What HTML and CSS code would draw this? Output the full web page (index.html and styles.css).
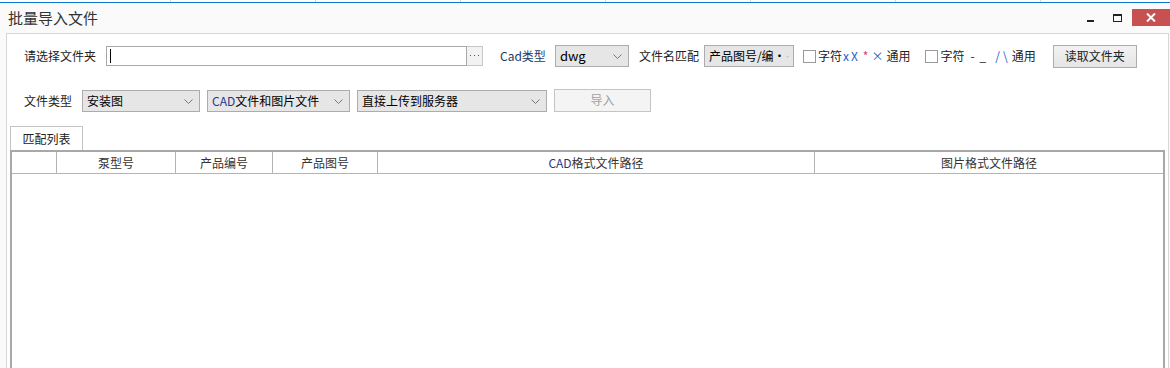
FILE: index.html
```html
<!DOCTYPE html>
<html lang="zh-CN">

<head>
    <meta charset="UTF-8">
    <title>批量导入文件</title>
    <link rel="stylesheet" href="styles.css">
</head>

<body>
    <div class="strip">
        <span></span><span></span><span></span><span></span><span></span><span></span><span></span>
    </div>

    <div class="titlebar">
        <span class="title">批量导入文件</span>
        <div class="win_ctrls">
            <div class="win_min"></div>
            <div class="win_max"></div>
            <div class="win_x">
                <svg width="10" height="9" viewBox="0 0 10 9">
                    <path d="M1 0.5 L9 8.5 M9 0.5 L1 8.5" stroke="#fff" stroke-width="2"/>
                </svg>
            </div>
        </div>
    </div>

    <div class="panel">
        <div class="row row1">
            <span class="label">请选择文件夹</span>
            <div class="path">
                <span class="path_input"><span class="caret"></span></span>
                <span class="dots">
                    <svg width="9" height="2" viewBox="0 0 9 2"><rect x="0" y="0" width="1" height="1" fill="#555"/><rect x="4" y="0" width="1" height="1" fill="#555"/><rect x="8" y="0" width="1" height="1" fill="#555"/></svg>
                </span>
            </div>
            <span class="label cad_label">Cad类型</span>
            <div class="select sel_dwg">dwg<svg class="arrow" width="9" height="5" viewBox="0 0 9 5"><path d="M0.5 0.5 L4.5 4.5 L8.5 0.5" fill="none" stroke="#777"/></svg></div>
            <span class="label match_label">文件名匹配</span>
            <div class="select sel_match">产品图号/编·<svg class="arrow" width="9" height="5" viewBox="0 0 9 5"><path d="M0.5 0.5 L4.5 4.5 L8.5 0.5" fill="none" stroke="#777"/></svg></div>
            <label class="check chk1"><span class="box"></span>字符<span class="s1 blue">x</span><span class="s2 blue">X</span><span class="s3 red">*</span><span class="s4 blue">×</span><span class="s5">通用</span></label>
            <label class="check chk2"><span class="box"></span>字符<span class="t1">-</span><span class="t2">_</span><span class="t3 blue">/</span><span class="t4 blue">\</span><span class="t5">通用</span></label>
            <button class="btn btn_read">读取文件夹</button>
        </div>

        <div class="row row2">
            <span class="label">文件类型</span>
            <div class="select sel_type">安装图<svg class="arrow" width="9" height="5" viewBox="0 0 9 5"><path d="M0.5 0.5 L4.5 4.5 L8.5 0.5" fill="none" stroke="#777"/></svg></div>
            <div class="select sel_files"><span><span class="cad">CAD</span>文件和图片文件</span><svg class="arrow" width="9" height="5" viewBox="0 0 9 5"><path d="M0.5 0.5 L4.5 4.5 L8.5 0.5" fill="none" stroke="#777"/></svg></div>
            <div class="select sel_upload">直接上传到服务器<svg class="arrow" width="9" height="5" viewBox="0 0 9 5"><path d="M0.5 0.5 L4.5 4.5 L8.5 0.5" fill="none" stroke="#777"/></svg></div>
            <button class="btn btn_import" disabled>导入</button>
        </div>

        <div class="tabs">
            <span class="tab">匹配列表</span>
        </div>

        <div class="grid">
            <div class="grid_head">
                <span></span>
                <span>泵型号</span>
                <span>产品编号</span>
                <span>产品图号</span>
                <span><span class="cad">CAD</span>格式文件路径</span>
                <span>图片格式文件路径</span>
            </div>
            <div class="grid_body"></div>
        </div>
    </div>
</body>

</html>
```

FILE: styles.css
```css
body {
    margin: 0;
    padding: 0;
    width: 1170px;
    height: 368px;
    overflow: hidden;
    background-color: #fafafa;
    font-family: "Noto Sans CJK SC", sans-serif;
    font-size: 12px;
    color: #222;
}

.strip {
    display: flex;
    height: 2px;
    overflow: hidden;
    background-color: #fff;
    border-bottom: 1px solid #0a78d2;
    padding-left: 170px;
}

.strip span {
    flex: none;
    width: 144px;
    border-left: 1px solid #d8d8d8;
}

.titlebar {
    display: flex;
    justify-content: space-between;
    height: 30px;
    background-color: #fafafa;
}

.title {
    padding-left: 8px;
    font-size: 15px;
    line-height: 30px;
    color: #333;
}

.win_ctrls {
    display: flex;
    flex: none;
    width: 83px;
    align-items: flex-start;
}

.win_min {
    flex: none;
    width: 7px;
    height: 2px;
    background-color: #222;
    margin-top: 17px;
}

.win_max {
    flex: none;
    width: 7px;
    height: 5px;
    border: 1px solid #222;
    border-top-width: 2px;
    margin-top: 11px;
    margin-left: 19px;
}

.win_x {
    flex: none;
    display: flex;
    align-items: center;
    justify-content: center;
    width: 38px;
    height: 17px;
    margin-top: 6px;
    margin-left: 10px;
    background-color: #c75050;
}

.panel {
    margin-left: 6px;
    margin-right: 1px;
    height: 340px;
    background-color: #fff;
    border: 1px solid #d6d6d6;
    border-bottom: none;
}

.row {
    display: flex;
    align-items: center;
    height: 24px;
    padding-left: 17px;
}

.row1 {
    margin-top: 10px;
}

.row2 {
    margin-top: 21px;
}

.label {
    line-height: 16px;
    white-space: nowrap;
    color: #222;
}

.path {
    display: flex;
    flex: none;
    margin-left: 10px;
}

.path_input {
    display: flex;
    align-items: center;
    width: 359px;
    height: 18px;
    border: 1px solid #a8a8a8;
    background-color: #fff;
}

.caret {
    width: 1px;
    height: 14px;
    margin-left: 3px;
    background-color: #000;
}

.dots {
    display: flex;
    align-items: center;
    justify-content: center;
    width: 15px;
    height: 18px;
    border: 1px solid #c8c8c8;
    border-left: none;
    background-color: #f2f2f2;
}

.cad_label {
    margin-left: 17px;
    color: #1c3a6a;
}

.select {
    display: flex;
    flex: none;
    align-items: center;
    justify-content: space-between;
    box-sizing: border-box;
    height: 22px;
    padding: 0 6px 0 4px;
    border: 1px solid #acacac;
    background-color: #e6e6e6;
    color: #000;
    line-height: 16px;
    white-space: nowrap;
    overflow: hidden;
}

.sel_dwg {
    width: 74px;
    margin-left: 9px;
    font-size: 13px;
}

.match_label {
    margin-left: 10px;
}

.sel_match {
    width: 90px;
    margin-left: 5px;
    padding-right: 4px;
}

.check {
    display: flex;
    flex: none;
    align-items: center;
    line-height: 16px;
    white-space: nowrap;
    color: #222;
}

.chk1 {
    margin-left: 9px;
}

.chk2 {
    margin-left: 15px;
}

.box {
    width: 11px;
    height: 11px;
    border: 1px solid #9a9a9a;
    background-color: #fff;
    margin-right: 2px;
}

.s1 { margin-left: 1px; }
.s2 { margin-left: 2px; }
.s3 { margin-left: 5px; }
.s4 { margin-left: 3px; }
.s5 { margin-left: 3px; }

.t1 { margin-left: 6px; }
.t2 { margin-left: 5px; }
.t3 { margin-left: 9px; }
.t4 { margin-left: 3px; }
.t5 { margin-left: 4px; }

.blue {
    color: #2a5cc8;
}

.red {
    color: #e0406a;
}

.btn {
    flex: none;
    box-sizing: border-box;
    height: 23px;
    border: 1px solid #adadad;
    background: linear-gradient(#f2f2f2, #e5e5e5);
    font-family: "Noto Sans CJK SC", sans-serif;
    font-size: 12px;
    line-height: 16px;
    color: #222;
    padding: 0;
}

.btn_read {
    width: 84px;
    margin-left: 17px;
}

.sel_type {
    width: 118px;
    margin-left: 10px;
}

.sel_files {
    width: 143px;
    margin-left: 7px;
}

.cad {
    color: #1c3a8a;
}

.sel_upload {
    width: 190px;
    margin-left: 7px;
}

.btn_import {
    width: 97px;
    margin-left: 7px;
    margin-top: -2px;
    background: #f4f4f4;
    border-color: #c4c4c4;
    color: #a0a0a0;
}

.tabs {
    display: flex;
    margin-top: 13px;
    padding-left: 3px;
}

.tab {
    width: 71px;
    height: 23px;
    border: 1px solid #c4c4c4;
    border-bottom: none;
    background-color: #fff;
    line-height: 23px;
    text-align: center;
    color: #222;
}

.grid {
    margin-left: 3px;
    margin-right: 3px;
    height: 220px;
    border: 2px solid #a8a8a8;
    border-bottom: none;
    background-color: #fff;
}

.grid_head {
    display: grid;
    grid-template-columns: 45px 119px 97px 105px 437px 1fr;
    height: 21px;
    border-bottom: 1px solid #b4b4b4;
}

.grid_head > span {
    line-height: 21px;
    text-align: center;
    color: #333;
    border-right: 1px solid #b4b4b4;
    white-space: nowrap;
}

.grid_head > span:last-child {
    border-right: none;
}
```
